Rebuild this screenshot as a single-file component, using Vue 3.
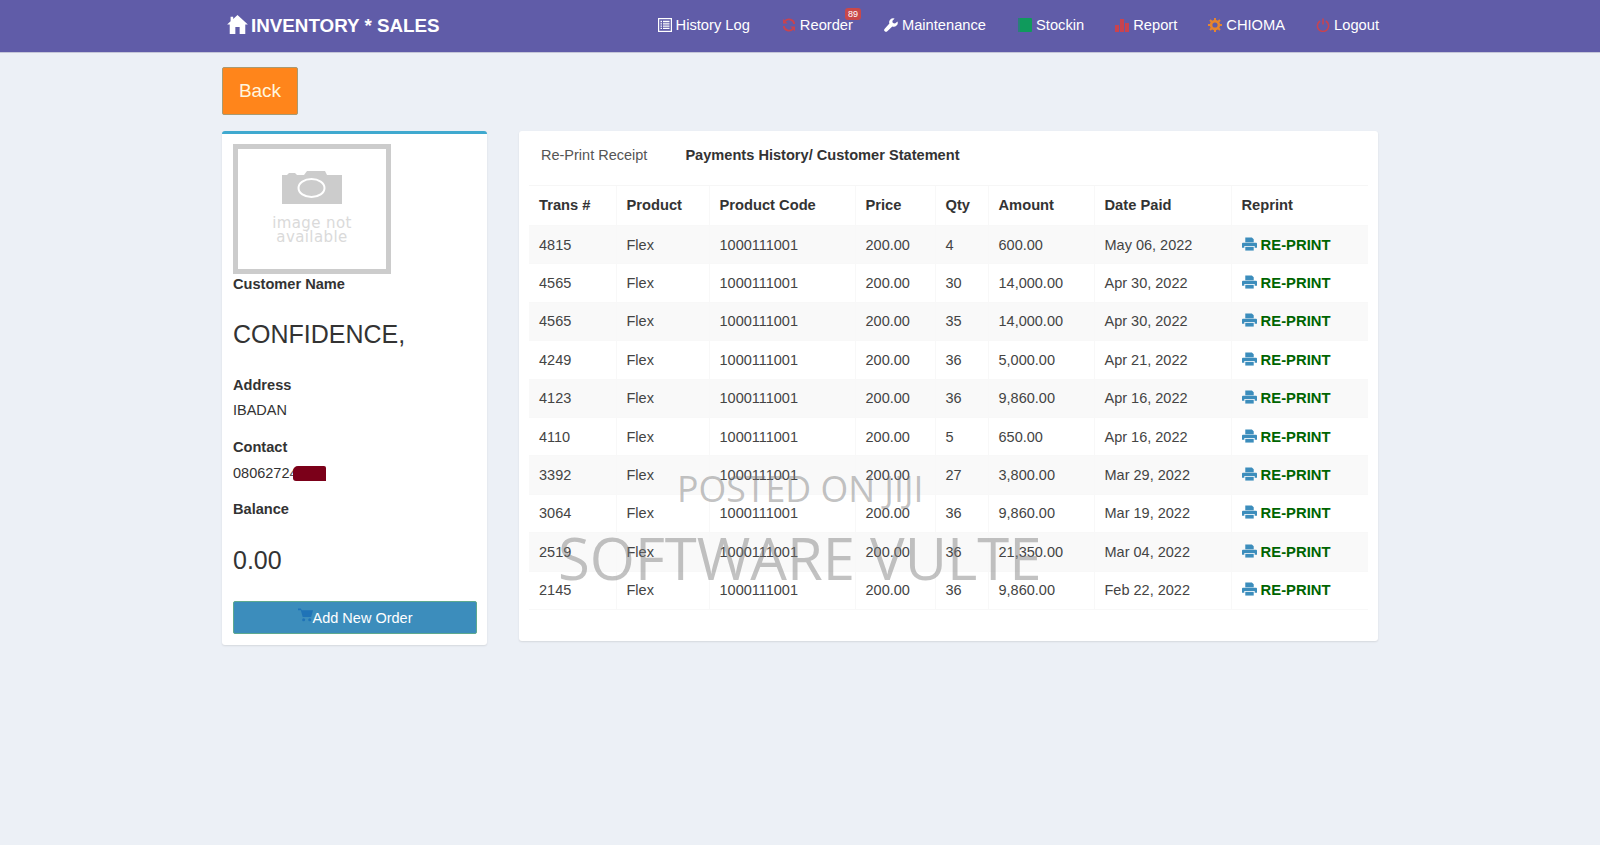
<template>
  <div class="page">
    <header class="navbar">
      <div class="brand">
        <svg class="home" viewBox="0 0 24 22"><path d="M12 0 L24 11 L21 11 L21 22 L14.5 22 L14.5 14 L9.5 14 L9.5 22 L3 22 L3 11 L0 11 L4 7.3 L4 2 L7 2 L7 4.6 Z" fill="#fff"/></svg>
        <span>INVENTORY * SALES</span>
      </div>
      <nav class="menu">
        <a class="item history">
          <svg viewBox="0 0 14 14"><rect x=".6" y=".6" width="12.8" height="12.8" fill="none" stroke="#fff" stroke-width="1.2"/><path d="M2.5 3.500h1.500M5 3.500h6.500M2.500 5.800h1.500M5 5.800h6.500M2.500 8.100h1.500M5 8.100h6.500M2.500 10.400h1.500M5 10.400h6.500" stroke="#fff" stroke-width="1.300"/></svg>
          History Log
        </a>
        <a class="item reorder">
          <svg viewBox="0 0 14 14"><path d="M12.300 6A5.400 5.400 0 0 0 3 3.200M1.700 8a5.400 5.400 0 0 0 9.300 2.800" fill="none" stroke="#c9434f" stroke-width="1.900"/><path d="M1 .8v4.700h4.700zM13 13.200V8.500H8.300z" fill="#c9434f"/></svg>
          Reorder
          <span class="badge">89</span>
        </a>
        <a class="item maintenance">
          <svg viewBox="0 0 14 14"><path d="M13.500 3.400 11 5.600 8.800 5 8.300 2.900 10.600.5A4 4 0 0 0 5.400 5.600L.7 10.700a1.700 1.700 0 0 0 2.600 2.500L8.300 8.500a4 4 0 0 0 5.200-5.100z" fill="#fff"/></svg>
          Maintenance
        </a>
        <a class="item stockin">
          <svg viewBox="0 0 14 14"><rect x="0" y="0" width="14" height="14" rx="1" fill="#0f9a5c"/><rect x="0" y="0" width="2" height="14" fill="#2a7f7a"/></svg>
          Stockin
        </a>
        <a class="item report">
          <svg viewBox="0 0 14 14"><path d="M0 7h4v7H0zM5 1h4v13H5zM10 5h4v9h-4z" fill="#c9434f"/></svg>
          Report
        </a>
        <a class="item chioma">
          <svg viewBox="0 0 14 14"><circle cx="7" cy="7" r="3.900" fill="none" stroke="#e8852c" stroke-width="2.600"/><path d="M7 0v3M7 11v3M0 7h3M11 7h3M2 2l2.200 2.200M9.800 9.800 12 12M12 2 9.800 4.200M4.200 9.800 2 12" stroke="#e8852c" stroke-width="2"/></svg>
          CHIOMA
        </a>
        <a class="item logout">
          <svg viewBox="0 0 14 14"><path d="M4.200 3a5.600 5.600 0 1 0 5.600 0" fill="none" stroke="#c9434f" stroke-width="1.500"/><path d="M7 .5v6" stroke="#c9434f" stroke-width="1.500"/></svg>
          Logout
        </a>
      </nav>
    </header>

    <main class="content">
      <button class="back">Back</button>

      <div class="columns">
        <aside class="profile">
          <div class="placeholder">
            <svg class="camera" viewBox="0 0 60 33"><path d="M0 4h5l2-2h6l2 2h7l3-4h18l2 4h15v29H0z" fill="#ccc"/><ellipse cx="29.500" cy="17" rx="13" ry="9" fill="#ccc" stroke="#fff" stroke-width="2"/></svg>
            <span class="na">image not<br>available</span>
          </div>
          <div class="label first">Customer Name</div>
          <div class="big name">CONFIDENCE,</div>
          <div class="label address">Address</div>
          <div class="value">IBADAN</div>
          <div class="label contact">Contact</div>
          <div class="value phone">0806272<span class="hidden-digit">4</span><span class="scribble"></span></div>
          <div class="label balance">Balance</div>
          <div class="big amount">0.00</div>
          <button class="add">
            <svg viewBox="0 0 16 14"><path d="M0 0h3l1 2h12l-2 7H5L3 2H0z" fill="#1f73b7"/><circle cx="6" cy="12" r="1.600" fill="#1f73b7"/><circle cx="12.500" cy="12" r="1.600" fill="#1f73b7"/></svg>Add New Order
          </button>
        </aside>

        <section class="panel">
          <div class="tabs">
            <span class="tab">Re-Print Receipt</span>
            <span class="tab active">Payments History/ Customer Statement</span>
          </div>
          <table>
            <colgroup>
              <col v-for="w in widths" :key="w.id" :style="{ width: w.px + 'px' }">
            </colgroup>
            <thead>
              <tr>
                <th v-for="h in headers" :key="h">{{ h }}</th>
              </tr>
            </thead>
            <tbody>
              <tr v-for="(r, i) in rows" :key="i">
                <td>{{ r[0] }}</td>
                <td>Flex</td>
                <td>1000111001</td>
                <td>200.00</td>
                <td>{{ r[1] }}</td>
                <td>{{ r[2] }}</td>
                <td>{{ r[3] }}</td>
                <td class="reprint">
                  <svg viewBox="0 0 16 14"><path d="M3.500 0h7l2 2v3h-9zM1 5.600h14a1 1 0 0 1 1 1V11h-2.500V9h-11v2H0V6.600a1 1 0 0 1 1-1z" fill="#3c8dbc"/><path d="M3.500 10h9v4h-9z" fill="#3c8dbc"/></svg>
                  RE-PRINT
                </td>
              </tr>
            </tbody>
          </table>
        </section>
      </div>
    </main>

    <div class="mark mark-small">POSTED ON JIJI</div>
    <div class="mark mark-large">SOFTWARE VULTE</div>
  </div>
</template>

<script setup>
const headers = ["Trans #", "Product", "Product Code", "Price", "Qty", "Amount", "Date Paid", "Reprint"];

const widths = [87, 93, 146, 80, 53, 106, 137, 137].map((px, id) => ({ id, px }));

const rows = [
  ["4815", "4", "600.00", "May 06, 2022"],
  ["4565", "30", "14,000.00", "Apr 30, 2022"],
  ["4565", "35", "14,000.00", "Apr 30, 2022"],
  ["4249", "36", "5,000.00", "Apr 21, 2022"],
  ["4123", "36", "9,860.00", "Apr 16, 2022"],
  ["4110", "5", "650.00", "Apr 16, 2022"],
  ["3392", "27", "3,800.00", "Mar 29, 2022"],
  ["3064", "36", "9,860.00", "Mar 19, 2022"],
  ["2519", "36", "21,350.00", "Mar 04, 2022"],
  ["2145", "36", "9,860.00", "Feb 22, 2022"],
];
</script>

<style>
html, body {
  margin: 0;
  background: #ecf0f6;
}
</style>

<style scoped>
.page {
  position: relative;
  height: 845px;
  overflow: hidden;
  background: #ecf0f6;
  color: #333;
  font-family: "Liberation Sans", Arial, sans-serif;
  font-size: 14.5px;
}

.navbar {
  display: flex;
  justify-content: space-between;
  align-items: center;
  box-sizing: border-box;
  height: 53px;
  padding: 0 221px 2px 227px;
  background: #605ca8;
  border-bottom: 1px solid #c5c6d8;
  color: #fff;
}

.brand {
  display: flex;
  align-items: center;
  gap: 3px;
  padding-top: 2px;
  font-size: 18.800px;
  font-weight: bold;
}

.home {
  width: 21px;
  height: 19px;
  margin-top: -4px;
}

.menu {
  display: flex;
  align-items: center;
}

.item {
  position: relative;
  display: flex;
  align-items: center;
  gap: 4px;
  font-size: 14.700px;
}

.item svg {
  width: 14px;
  height: 14px;
}

.reorder { margin-left: 32px; }
.maintenance { margin-left: 31px; }
.stockin { margin-left: 32px; }
.report { margin-left: 31px; }
.chioma { margin-left: 31px; }
.logout { margin-left: 31px; }

.badge {
  position: absolute;
  top: -9px;
  right: -8px;
  padding: 1px 3px;
  border-radius: 3px;
  background: #c9484a;
  font-size: 9px;
  line-height: 10px;
}

.content {
  padding: 14px 221px 0 222px;
}

.back {
  display: block;
  width: 76px;
  height: 48px;
  padding: 0;
  border: 1px solid #a89a72;
  border-radius: 2px;
  background: #ff851b;
  color: #fff6df;
  font-family: inherit;
  font-size: 19px;
}

.columns {
  display: flex;
  align-items: flex-start;
  gap: 32px;
  margin-top: 16px;
}

.profile {
  display: flex;
  flex-direction: column;
  align-items: flex-start;
  box-sizing: border-box;
  width: 265px;
  height: 514px;
  padding: 10px 10px 0 11px;
  border-top: 3px solid #3fa9cf;
  border-radius: 3px;
  background: #fff;
  box-shadow: 0 1px 2px rgba(0, 0, 0, 0.1);
}

.placeholder {
  display: flex;
  flex-direction: column;
  align-items: center;
  box-sizing: border-box;
  width: 158px;
  height: 130px;
  padding-top: 22px;
  border: 5px solid #ccc;
}

.camera {
  width: 60px;
  height: 33px;
}

.na {
  margin-top: 12px;
  color: #dadada;
  font-family: "DejaVu Sans", sans-serif;
  font-size: 15px;
  line-height: 14px;
  text-align: center;
  letter-spacing: 0.4px;
}

.label {
  font-weight: bold;
  font-size: 14.600px;
  line-height: 20px;
}

.first { margin-top: 0; }

.big {
  font-size: 25px;
  line-height: 30px;
}

.name { margin-top: 25px; }
.address { margin-top: 26px; }
.contact { margin-top: 17px; }
.balance { margin-top: 16px; }
.amount { margin-top: 26px; }

.value {
  margin-top: 5px;
  line-height: 20px;
}

.phone {
  position: relative;
  margin-top: 6px;
}

.hidden-digit {
  opacity: 0.8;
}

.scribble {
  position: absolute;
  top: 3px;
  left: 60px;
  width: 33px;
  height: 15px;
  background: #7b0019;
  border-radius: 5px 2px 0 3px;
}

.add {
  display: flex;
  justify-content: center;
  align-items: center;
  box-sizing: border-box;
  width: 244px;
  height: 33px;
  margin-top: 26px;
  padding: 0;
  border: 1px solid #5ea98f;
  border-radius: 2px;
  background: #3c8dbc;
  color: #fff;
  font-family: inherit;
  font-size: 14.500px;
}

.add svg {
  width: 15px;
  height: 14px;
  margin-top: -5px;
}

.panel {
  box-sizing: border-box;
  width: 859px;
  height: 510px;
  padding: 0 9px 0 10px;
  border-radius: 3px;
  background: #fff;
  box-shadow: 0 1px 2px rgba(0, 0, 0, 0.1);
}

.tabs {
  display: flex;
  gap: 38px;
  height: 54px;
  padding: 16px 0 0 12px;
  box-sizing: border-box;
  line-height: 16px;
}

.tab { color: #555; }

.tab.active {
  color: #333;
  font-size: 14.600px;
  font-weight: bold;
}

table {
  width: 839px;
  border-collapse: collapse;
  table-layout: fixed;
}

th, td {
  height: 38.400px;
  padding: 0 0 0 10px;
  box-sizing: border-box;
  border: 1px solid #f8f8f8;
  border-width: 0 0 1px 1px;
  text-align: left;
  white-space: nowrap;
}

td {
  color: #444;
}

th:first-child, td:first-child {
  border-left: 0;
}

th {
  border-top: 1px solid #f6f6f6;
  height: 40px;
  padding-bottom: 2px;
  font-size: 14.700px;
}

tbody tr:nth-child(odd) {
  background: #f9f9f9;
}

td.reprint {
  color: #006400;
  font-size: 14.800px;
  font-weight: bold;
}

.reprint svg {
  width: 15px;
  height: 14px;
  vertical-align: -1px;
}

.mark {
  position: absolute;
  color: rgba(120, 120, 120, 0.45);
  font-family: "Open Sans", sans-serif;
  white-space: nowrap;
  pointer-events: none;
}

.mark-small {
  left: 677px;
  top: 465px;
  font-size: 35.700px;
  line-height: 46px;
}

.mark-large {
  left: 558px;
  top: 516px;
  font-size: 58px;
  line-height: 84px;
}
</style>
